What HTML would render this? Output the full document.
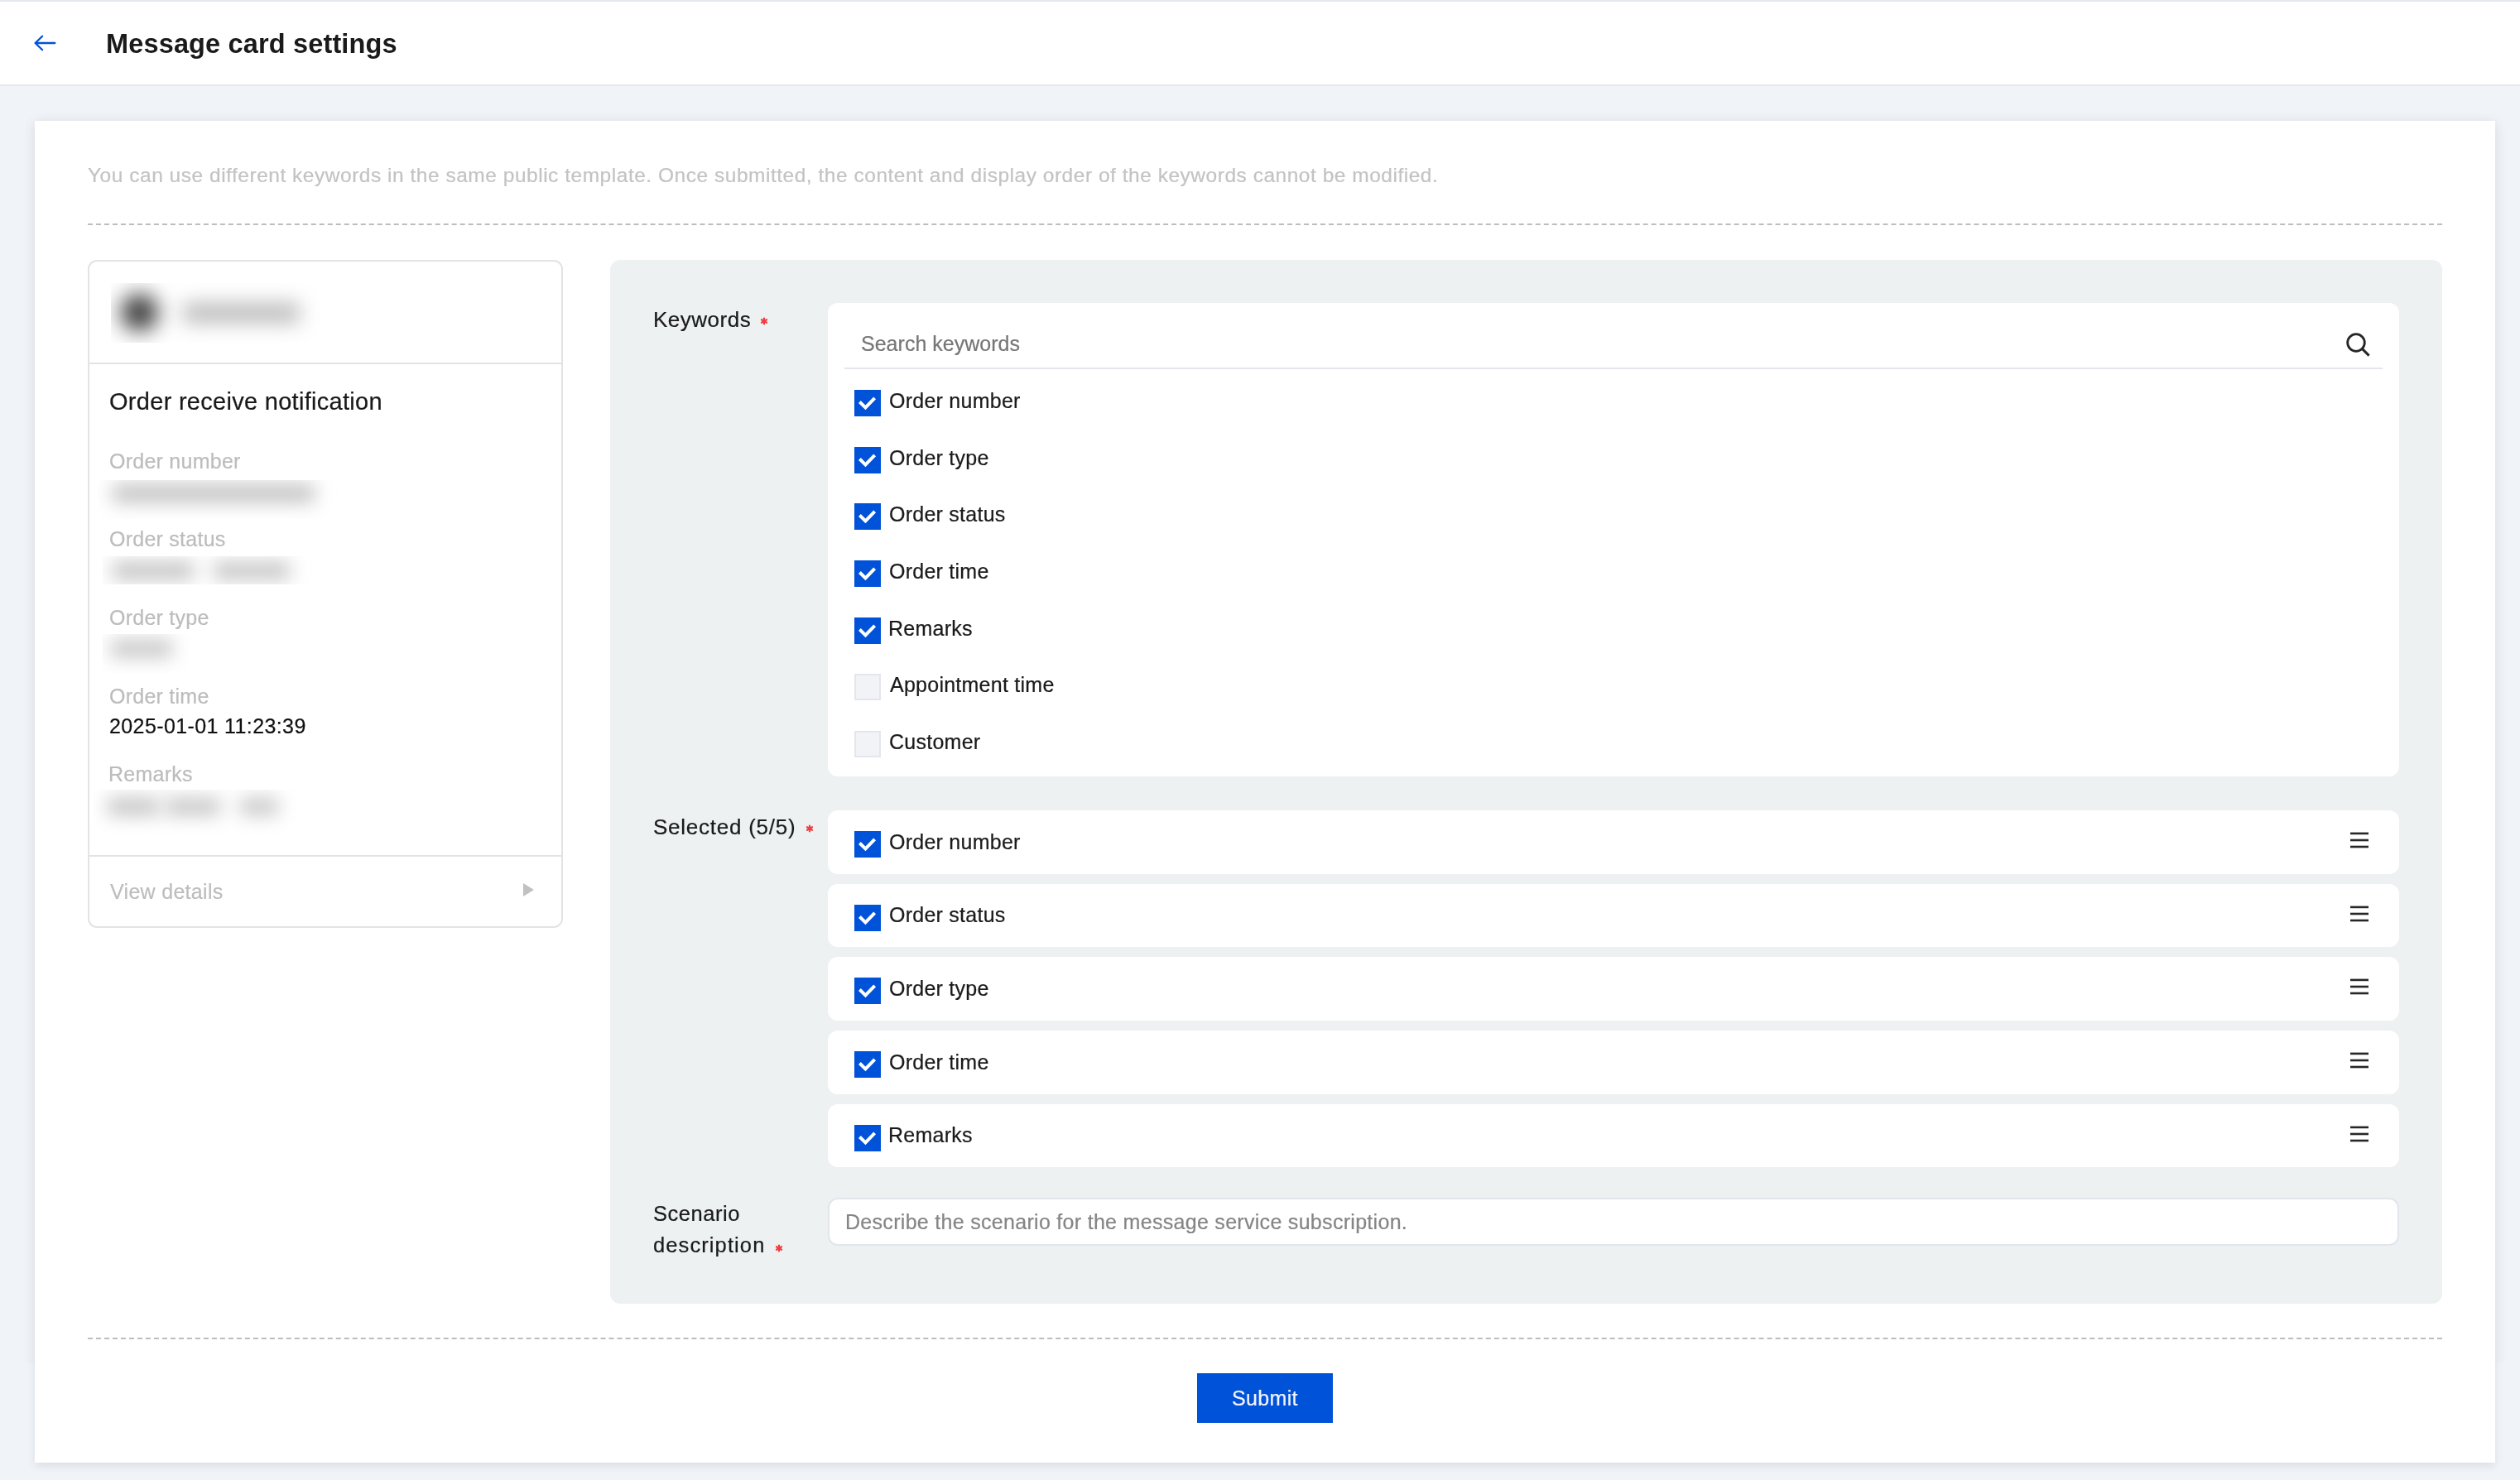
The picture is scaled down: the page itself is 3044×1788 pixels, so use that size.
<!DOCTYPE html>
<html><head><meta charset="utf-8"><title>Message card settings</title>
<style>
html,body{margin:0;padding:0}
body{width:3044px;height:1788px;position:relative;overflow:hidden;background:#f0f3f8;font-family:"Liberation Sans",sans-serif}
.t{position:absolute;white-space:nowrap;will-change:transform;font-family:"Liberation Sans",sans-serif}
</style></head><body>
<div style="position:absolute;left:0px;top:0px;width:3044px;height:2px;background:#e4e7ec"></div>
<div style="position:absolute;left:0px;top:2px;width:3044px;height:100px;background:#fff"></div>
<div style="position:absolute;left:0px;top:102px;width:3044px;height:2px;background:#e4e7ec"></div>
<svg style="position:absolute;left:0;top:0" width="100" height="100"><path d="M51.1 43.7 L42.6 52 L51.1 60.3 M42.6 52 H66.3" fill="none" stroke="#0052d9" stroke-width="2.3" stroke-linecap="round" stroke-linejoin="round"/></svg>
<div class="t" style="left:127.72px;top:36.89px;font-size:32.5px;line-height:32.5px;color:#1a1a1a;letter-spacing:0.15px;font-weight:700;">Message card settings</div>
<div style="position:absolute;left:42px;top:146px;width:2972px;height:1621px;background:#fff;box-shadow:0 2px 14px rgba(0,0,0,0.11)"></div>
<div class="t" style="left:106.27px;top:200.26px;font-size:24.5px;line-height:24.5px;color:#c3c3c3;letter-spacing:0.52px;font-weight:400;-webkit-text-stroke:0.22px currentColor;">You can use different keywords in the same public template. Once submitted, the content and display order of the keywords cannot be modified.</div>
<svg style="position:absolute;left:106px;top:270px" width="2844" height="2"><line x1="0" y1="1" x2="2844" y2="1" stroke="#bdbdbd" stroke-width="2" stroke-dasharray="6 3.993"/></svg>
<svg style="position:absolute;left:106px;top:1616px" width="2844" height="2"><line x1="0" y1="1" x2="2844" y2="1" stroke="#bdbdbd" stroke-width="2" stroke-dasharray="6 3.993"/></svg>
<div style="position:absolute;left:106px;top:314px;width:574px;height:807px;border:2px solid #e3e3e3;border-radius:11px;box-sizing:border-box"></div>
<div style="position:absolute;left:134px;top:342px;width:253px;height:72px;overflow:hidden;background:#fff"><div style="position:absolute;left:12px;top:13px;width:45px;height:45px;border-radius:50%;background:#3c3c3c;filter:blur(13px)"></div><div style="position:absolute;left:87px;top:24px;width:141px;height:24px;background:#bababa;filter:blur(12px)"></div></div>
<div style="position:absolute;left:108px;top:438px;width:570px;height:2px;background:#e3e3e3"></div>
<div class="t" style="left:131.55px;top:471.15px;font-size:29px;line-height:29px;color:#1a1a1a;letter-spacing:0.29px;font-weight:400;-webkit-text-stroke:0.22px currentColor;">Order receive notification</div>
<div class="t" style="left:131.75px;top:544.84px;font-size:25px;line-height:25px;color:#bcbcbc;letter-spacing:0.25px;font-weight:400;-webkit-text-stroke:0.22px currentColor;">Order number</div>
<div class="t" style="left:131.75px;top:638.84px;font-size:25px;line-height:25px;color:#bcbcbc;letter-spacing:0.25px;font-weight:400;-webkit-text-stroke:0.22px currentColor;">Order status</div>
<div class="t" style="left:131.75px;top:733.84px;font-size:25px;line-height:25px;color:#bcbcbc;letter-spacing:0.25px;font-weight:400;-webkit-text-stroke:0.22px currentColor;">Order type</div>
<div class="t" style="left:131.75px;top:828.84px;font-size:25px;line-height:25px;color:#bcbcbc;letter-spacing:0.25px;font-weight:400;-webkit-text-stroke:0.22px currentColor;">Order time</div>
<div class="t" style="left:131.00px;top:923.14px;font-size:25px;line-height:25px;color:#bcbcbc;letter-spacing:0.25px;font-weight:400;-webkit-text-stroke:0.22px currentColor;">Remarks</div>
<div style="position:absolute;left:118px;top:580px;width:292px;height:47px;overflow:hidden;background:#fff"><div style="position:absolute;left:18px;top:5px;width:244px;height:22px;background:#c2c2c2;filter:blur(11px)"></div></div>
<div style="position:absolute;left:124px;top:672px;width:253px;height:34px;overflow:hidden;background:#fff"><div style="position:absolute;left:12px;top:7px;width:98px;height:21px;background:#c2c2c2;filter:blur(11px)"></div><div style="position:absolute;left:134px;top:7px;width:92px;height:21px;background:#c4c4c4;filter:blur(11px)"></div></div>
<div style="position:absolute;left:124px;top:766px;width:105px;height:47px;overflow:hidden;background:#fff"><div style="position:absolute;left:10px;top:7px;width:74px;height:21px;background:#c6c6c6;filter:blur(11px)"></div></div>
<div class="t" style="left:131.75px;top:864.64px;font-size:25px;line-height:25px;color:#111;letter-spacing:0.39px;font-weight:400;-webkit-text-stroke:0.22px currentColor;">2025-01-01 11:23:39</div>
<div style="position:absolute;left:112px;top:954px;width:247px;height:56px;overflow:hidden;background:#fff"><div style="position:absolute;left:18px;top:10px;width:62px;height:21px;background:#c4c4c4;filter:blur(11px)"></div><div style="position:absolute;left:88px;top:10px;width:66px;height:21px;background:#c6c6c6;filter:blur(11px)"></div><div style="position:absolute;left:178px;top:10px;width:46px;height:21px;background:#c8c8c8;filter:blur(11px)"></div></div>
<div style="position:absolute;left:108px;top:1033px;width:570px;height:2px;background:#e3e3e3"></div>
<div class="t" style="left:132.75px;top:1064.84px;font-size:25px;line-height:25px;color:#bdbdbd;letter-spacing:0.3px;font-weight:400;-webkit-text-stroke:0.22px currentColor;">View details</div>
<svg style="position:absolute;left:628px;top:1064px" width="20" height="22"><path d="M4 3 L17 11 L4 19 Z" fill="#c1c1c1"/></svg>
<div style="position:absolute;left:737px;top:314px;width:2213px;height:1261px;background:#edf1f2;border-radius:12px"></div>
<div class="t" style="left:788.82px;top:372.99px;font-size:26px;line-height:26px;color:#1a1a1a;letter-spacing:0.5px;font-weight:400;-webkit-text-stroke:0.22px currentColor;">Keywords</div>
<svg style="position:absolute;left:915.50px;top:381.25px" width="14" height="14"><g stroke="#f23d40" stroke-width="2.2" stroke-linecap="round"><line x1="7" y1="3.5" x2="7" y2="10.5"/><line x1="3.969" y1="5.250" x2="10.031" y2="8.750"/><line x1="3.969" y1="8.750" x2="10.031" y2="5.250"/></g></svg>
<div style="position:absolute;left:1000px;top:366px;width:1898px;height:572px;background:#fff;border-radius:12px"></div>
<div class="t" style="left:1039.75px;top:402.84px;font-size:25px;line-height:25px;color:#767676;letter-spacing:0.02px;font-weight:400;-webkit-text-stroke:0.22px currentColor;">Search keywords</div>
<svg style="position:absolute;left:2826px;top:394px" width="44" height="44"><circle cx="20" cy="20" r="10.3" fill="none" stroke="#262626" stroke-width="2.8"/><line x1="27.6" y1="27.6" x2="35.6" y2="35.6" stroke="#262626" stroke-width="3" stroke-linecap="butt"/></svg>
<div style="position:absolute;left:1020px;top:444px;width:1858px;height:2px;background:#e4e6eb"></div>
<svg style="position:absolute;left:1032px;top:471.00px" width="32" height="32"><rect width="32" height="32" fill="#0052d9"/><polyline points="6.4,14.45 13.44,21.35 24.64,9.85" fill="none" stroke="#fff" stroke-width="4" stroke-linecap="butt" stroke-linejoin="miter"/></svg>
<div class="t" style="left:1073.75px;top:471.84px;font-size:25px;line-height:25px;color:#1a1a1a;letter-spacing:0.25px;font-weight:400;-webkit-text-stroke:0.22px currentColor;">Order number</div>
<svg style="position:absolute;left:1032px;top:539.67px" width="32" height="32"><rect width="32" height="32" fill="#0052d9"/><polyline points="6.4,14.45 13.44,21.35 24.64,9.85" fill="none" stroke="#fff" stroke-width="4" stroke-linecap="butt" stroke-linejoin="miter"/></svg>
<div class="t" style="left:1073.75px;top:540.51px;font-size:25px;line-height:25px;color:#1a1a1a;letter-spacing:0.25px;font-weight:400;-webkit-text-stroke:0.22px currentColor;">Order type</div>
<svg style="position:absolute;left:1032px;top:608.34px" width="32" height="32"><rect width="32" height="32" fill="#0052d9"/><polyline points="6.4,14.45 13.44,21.35 24.64,9.85" fill="none" stroke="#fff" stroke-width="4" stroke-linecap="butt" stroke-linejoin="miter"/></svg>
<div class="t" style="left:1073.75px;top:609.18px;font-size:25px;line-height:25px;color:#1a1a1a;letter-spacing:0.25px;font-weight:400;-webkit-text-stroke:0.22px currentColor;">Order status</div>
<svg style="position:absolute;left:1032px;top:677.01px" width="32" height="32"><rect width="32" height="32" fill="#0052d9"/><polyline points="6.4,14.45 13.44,21.35 24.64,9.85" fill="none" stroke="#fff" stroke-width="4" stroke-linecap="butt" stroke-linejoin="miter"/></svg>
<div class="t" style="left:1073.75px;top:677.85px;font-size:25px;line-height:25px;color:#1a1a1a;letter-spacing:0.25px;font-weight:400;-webkit-text-stroke:0.22px currentColor;">Order time</div>
<svg style="position:absolute;left:1032px;top:745.68px" width="32" height="32"><rect width="32" height="32" fill="#0052d9"/><polyline points="6.4,14.45 13.44,21.35 24.64,9.85" fill="none" stroke="#fff" stroke-width="4" stroke-linecap="butt" stroke-linejoin="miter"/></svg>
<div class="t" style="left:1073.00px;top:746.52px;font-size:25px;line-height:25px;color:#1a1a1a;letter-spacing:0.25px;font-weight:400;-webkit-text-stroke:0.22px currentColor;">Remarks</div>
<div style="position:absolute;left:1032px;top:814.35px;width:32px;height:32px;box-sizing:border-box;border:2px solid #e3e6eb;background:#f1f3f7"></div>
<div class="t" style="left:1075.00px;top:815.19px;font-size:25px;line-height:25px;color:#1a1a1a;letter-spacing:0.25px;font-weight:400;-webkit-text-stroke:0.22px currentColor;">Appointment time</div>
<div style="position:absolute;left:1032px;top:883.02px;width:32px;height:32px;box-sizing:border-box;border:2px solid #e3e6eb;background:#f1f3f7"></div>
<div class="t" style="left:1073.75px;top:883.86px;font-size:25px;line-height:25px;color:#1a1a1a;letter-spacing:0.25px;font-weight:400;-webkit-text-stroke:0.22px currentColor;">Customer</div>
<div class="t" style="left:788.50px;top:985.99px;font-size:26px;line-height:26px;color:#1a1a1a;letter-spacing:0.75px;font-weight:400;-webkit-text-stroke:0.22px currentColor;">Selected (5/5)</div>
<svg style="position:absolute;left:970.70px;top:993.95px" width="14" height="14"><g stroke="#f23d40" stroke-width="2.2" stroke-linecap="round"><line x1="7" y1="3.5" x2="7" y2="10.5"/><line x1="3.969" y1="5.250" x2="10.031" y2="8.750"/><line x1="3.969" y1="8.750" x2="10.031" y2="5.250"/></g></svg>
<div style="position:absolute;left:1000px;top:979.00px;width:1898px;height:76.8px;background:#fff;border-radius:12px"></div>
<svg style="position:absolute;left:1032px;top:1004.00px" width="32" height="32"><rect width="32" height="32" fill="#0052d9"/><polyline points="6.4,14.45 13.44,21.35 24.64,9.85" fill="none" stroke="#fff" stroke-width="4" stroke-linecap="butt" stroke-linejoin="miter"/></svg>
<div class="t" style="left:1073.75px;top:1004.84px;font-size:25px;line-height:25px;color:#1a1a1a;letter-spacing:0.25px;font-weight:400;-webkit-text-stroke:0.22px currentColor;">Order number</div>
<svg style="position:absolute;left:2839px;top:999.00px" width="22" height="34"><g fill="#262626"><rect x="0" y="6.6" width="22" height="2.6"/><rect x="0" y="14.7" width="22" height="2.6"/><rect x="0" y="22.7" width="22" height="2.6"/></g></svg>
<div style="position:absolute;left:1000px;top:1067.65px;width:1898px;height:76.8px;background:#fff;border-radius:12px"></div>
<svg style="position:absolute;left:1032px;top:1092.65px" width="32" height="32"><rect width="32" height="32" fill="#0052d9"/><polyline points="6.4,14.45 13.44,21.35 24.64,9.85" fill="none" stroke="#fff" stroke-width="4" stroke-linecap="butt" stroke-linejoin="miter"/></svg>
<div class="t" style="left:1073.75px;top:1093.49px;font-size:25px;line-height:25px;color:#1a1a1a;letter-spacing:0.25px;font-weight:400;-webkit-text-stroke:0.22px currentColor;">Order status</div>
<svg style="position:absolute;left:2839px;top:1087.65px" width="22" height="34"><g fill="#262626"><rect x="0" y="6.6" width="22" height="2.6"/><rect x="0" y="14.7" width="22" height="2.6"/><rect x="0" y="22.7" width="22" height="2.6"/></g></svg>
<div style="position:absolute;left:1000px;top:1156.30px;width:1898px;height:76.8px;background:#fff;border-radius:12px"></div>
<svg style="position:absolute;left:1032px;top:1181.30px" width="32" height="32"><rect width="32" height="32" fill="#0052d9"/><polyline points="6.4,14.45 13.44,21.35 24.64,9.85" fill="none" stroke="#fff" stroke-width="4" stroke-linecap="butt" stroke-linejoin="miter"/></svg>
<div class="t" style="left:1073.75px;top:1182.14px;font-size:25px;line-height:25px;color:#1a1a1a;letter-spacing:0.25px;font-weight:400;-webkit-text-stroke:0.22px currentColor;">Order type</div>
<svg style="position:absolute;left:2839px;top:1176.30px" width="22" height="34"><g fill="#262626"><rect x="0" y="6.6" width="22" height="2.6"/><rect x="0" y="14.7" width="22" height="2.6"/><rect x="0" y="22.7" width="22" height="2.6"/></g></svg>
<div style="position:absolute;left:1000px;top:1244.95px;width:1898px;height:76.8px;background:#fff;border-radius:12px"></div>
<svg style="position:absolute;left:1032px;top:1269.95px" width="32" height="32"><rect width="32" height="32" fill="#0052d9"/><polyline points="6.4,14.45 13.44,21.35 24.64,9.85" fill="none" stroke="#fff" stroke-width="4" stroke-linecap="butt" stroke-linejoin="miter"/></svg>
<div class="t" style="left:1073.75px;top:1270.79px;font-size:25px;line-height:25px;color:#1a1a1a;letter-spacing:0.25px;font-weight:400;-webkit-text-stroke:0.22px currentColor;">Order time</div>
<svg style="position:absolute;left:2839px;top:1264.95px" width="22" height="34"><g fill="#262626"><rect x="0" y="6.6" width="22" height="2.6"/><rect x="0" y="14.7" width="22" height="2.6"/><rect x="0" y="22.7" width="22" height="2.6"/></g></svg>
<div style="position:absolute;left:1000px;top:1333.60px;width:1898px;height:76.8px;background:#fff;border-radius:12px"></div>
<svg style="position:absolute;left:1032px;top:1358.60px" width="32" height="32"><rect width="32" height="32" fill="#0052d9"/><polyline points="6.4,14.45 13.44,21.35 24.64,9.85" fill="none" stroke="#fff" stroke-width="4" stroke-linecap="butt" stroke-linejoin="miter"/></svg>
<div class="t" style="left:1073.00px;top:1359.44px;font-size:25px;line-height:25px;color:#1a1a1a;letter-spacing:0.25px;font-weight:400;-webkit-text-stroke:0.22px currentColor;">Remarks</div>
<svg style="position:absolute;left:2839px;top:1353.60px" width="22" height="34"><g fill="#262626"><rect x="0" y="6.6" width="22" height="2.6"/><rect x="0" y="14.7" width="22" height="2.6"/><rect x="0" y="22.7" width="22" height="2.6"/></g></svg>
<div class="t" style="left:788.52px;top:1453.71px;font-size:25.5px;line-height:25.5px;color:#1a1a1a;letter-spacing:0.55px;font-weight:400;-webkit-text-stroke:0.22px currentColor;">Scenario</div>
<div class="t" style="left:788.52px;top:1492.41px;font-size:25.5px;line-height:25.5px;color:#1a1a1a;letter-spacing:1.1px;font-weight:400;-webkit-text-stroke:0.22px currentColor;">description</div>
<svg style="position:absolute;left:933.90px;top:1500.55px" width="14" height="14"><g stroke="#f23d40" stroke-width="2.2" stroke-linecap="round"><line x1="7" y1="3.5" x2="7" y2="10.5"/><line x1="3.969" y1="5.250" x2="10.031" y2="8.750"/><line x1="3.969" y1="8.750" x2="10.031" y2="5.250"/></g></svg>
<div style="position:absolute;left:1000px;top:1447px;width:1898px;height:58px;background:#fff;border:2px solid #e2e5ec;border-radius:12px;box-sizing:border-box"></div>
<div class="t" style="left:1021.00px;top:1463.84px;font-size:25px;line-height:25px;color:#858585;letter-spacing:0.3px;font-weight:400;-webkit-text-stroke:0.22px currentColor;">Describe the scenario for the message service subscription.</div>
<div style="position:absolute;left:0;top:1647px;width:3044px;height:141px;overflow:hidden;background:#f0f3f8"><div style="position:absolute;left:42px;top:-30px;width:2972px;height:150px;background:#fff;box-shadow:0 4px 10px rgba(0,0,0,0.09)"></div></div>
<div style="position:absolute;left:1446px;top:1659px;width:164px;height:60px;background:#0052d9"></div>
<div class="t" style="left:1487.75px;top:1676.84px;font-size:25px;line-height:25px;color:#f2f4ff;letter-spacing:0.35px;font-weight:400;-webkit-text-stroke:0.22px currentColor;">Submit</div>
</body></html>
